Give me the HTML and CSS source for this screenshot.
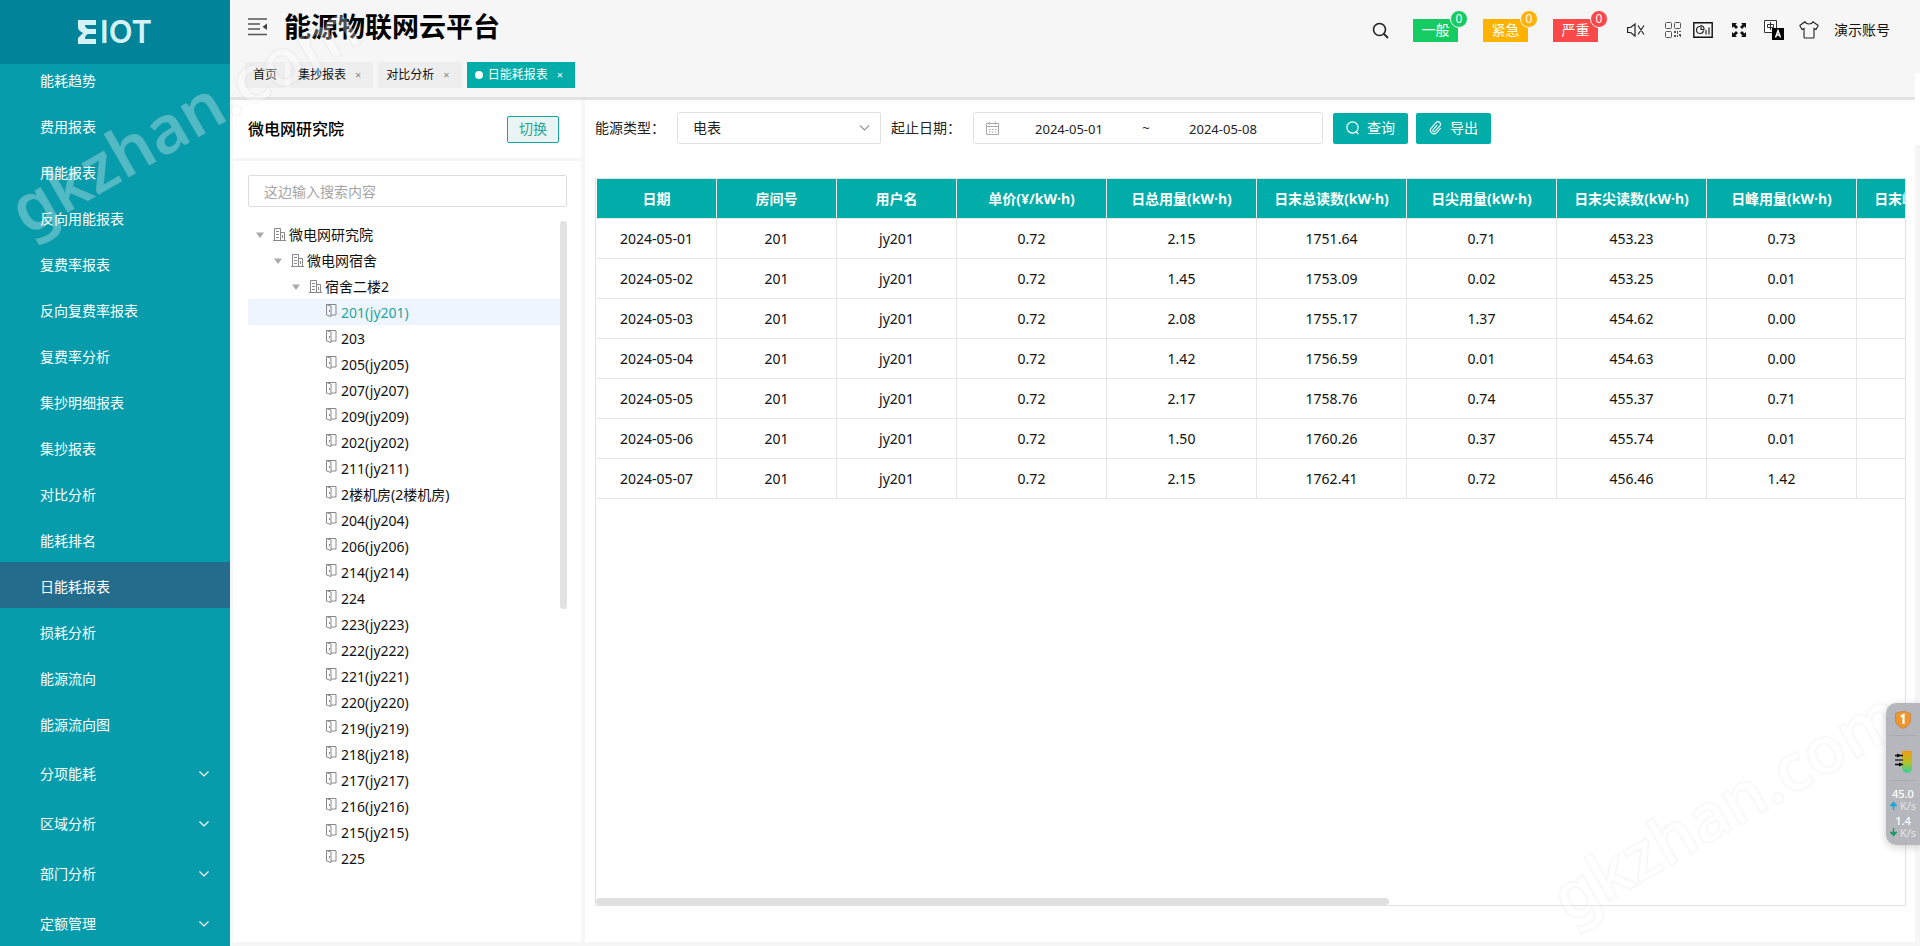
FILE: index.html
```html
<!DOCTYPE html>
<html lang="zh-CN">
<head>
<meta charset="utf-8">
<title>能源物联网云平台</title>
<link rel="stylesheet" href="styles.css">
</head>
<body>
<svg class="sprite" aria-hidden="true">
  <symbol id="i-building" viewBox="0 0 13 13"><path d="M1.5 12V.5h6V12M7.500 4.500h4V12M0 12.500h13M3 3.500h3M3 6.500h3M3 9.500h3M9.500 7v3" fill="none" stroke="#888"/></symbol>
  <symbol id="i-door" viewBox="0 0 11 13"><path d="M.5.5v10.500l4.500 1.500V2zM.5.500h9.500v10.500H5M3.500 6v2" fill="none" stroke="#888"/></symbol>
  <symbol id="i-caret" viewBox="0 0 8 6"><path d="M0 .5h8L4 6z" fill="#aaa"/></symbol>
  <symbol id="i-chevron" viewBox="0 0 12 8"><path d="M1.500 1.500L6 6l4.500-4.500" fill="none" stroke="currentColor" stroke-width="1.200"/></symbol>
</svg>

<div class="app">
  <aside class="sidebar">
    <div class="logo">
      <svg class="logo-mark" viewBox="0 0 18 24"><path d="M0 0h18v5H7c0 2 1 3 3 4h8v5h-8c-2 1-3 2-3 5h11v5H0v-6l5-5c-3-2-5-3-5-6z"/></svg>
      <span>IOT</span>
    </div>
    <nav class="nav">
      <ul>
        <li><a href="#">能耗趋势</a></li>
        <li><a href="#">费用报表</a></li>
        <li><a href="#">用能报表</a></li>
        <li><a href="#">反向用能报表</a></li>
        <li><a href="#">复费率报表</a></li>
        <li><a href="#">反向复费率报表</a></li>
        <li><a href="#">复费率分析</a></li>
        <li><a href="#">集抄明细报表</a></li>
        <li><a href="#">集抄报表</a></li>
        <li><a href="#">对比分析</a></li>
        <li><a href="#">能耗排名</a></li>
        <li><a href="#" class="current">日能耗报表</a></li>
        <li><a href="#">损耗分析</a></li>
        <li><a href="#">能源流向</a></li>
        <li><a href="#">能源流向图</a></li>
      </ul>
      <ul class="groups">
        <li><a href="#">分项能耗<svg><use href="#i-chevron"/></svg></a></li>
        <li><a href="#">区域分析<svg><use href="#i-chevron"/></svg></a></li>
        <li><a href="#">部门分析<svg><use href="#i-chevron"/></svg></a></li>
        <li><a href="#">定额管理<svg><use href="#i-chevron"/></svg></a></li>
      </ul>
    </nav>
  </aside>

  <div class="main">
    <header class="header">
      <div class="topbar">
        <button class="icon-btn fold" aria-label="折叠菜单"><svg width="20" height="18" viewBox="0 0 20 18"><path d="M0 1h19M0 6h12M0 11h12M0 16.500h19" fill="none" stroke="#555" stroke-width="1.500"/><path d="M19 5.500v6.500l-4.500-3.200z" fill="#444"/></svg></button>
        <h1>能源物联网云平台</h1>
        <div class="tools">
          <button class="icon-btn search" aria-label="搜索"><svg width="17" height="17" viewBox="0 0 17 17"><circle cx="7.500" cy="7.500" r="6" fill="none" stroke="#222" stroke-width="1.600"/><path d="M12 12l4 4" stroke="#222" stroke-width="1.800"/></svg></button>
          <div class="alarms">
            <button class="alarm green">一般<span>0</span></button>
            <button class="alarm yellow">紧急<span>0</span></button>
            <button class="alarm red">严重<span>0</span></button>
          </div>
          <button class="icon-btn mute" aria-label="静音"><svg width="18" height="14" viewBox="0 0 18 14"><path d="M.6 4.500h3L8 1v12L3.600 9.500h-3zM11 2.500l6 9M17 2.500l-6 9" fill="none" stroke="#222" stroke-width="1.200"/></svg></button>
          <button class="icon-btn qr" aria-label="二维码"><svg width="16" height="16" viewBox="0 0 16 16"><g fill="none" stroke="#555"><rect x=".5" y=".5" width="6" height="6" rx="1"/><rect x="9.500" y=".5" width="6" height="6" rx="1"/><rect x=".5" y="9.500" width="6" height="6" rx="1"/></g><path d="M9 9h2v2H9zM12 9h1v3h-1zM14 9h2v1h-2zM9 13h2v2H9zM12 13h1v2h-1zM14 12h2v3h-1v-1h-1z" fill="#555"/></svg></button>
          <button class="icon-btn chart" aria-label="大屏"><svg width="20" height="16" viewBox="0 0 20 16"><path d="M.8.8h18.400v14.400H.8z" fill="none" stroke="#111" stroke-width="1.400"/><path d="M7 4.500a3.500 3.500 0 1 0 3.500 4M8 3.500v4h3A3.500 3.500 0 0 0 8 3.500zM13 8v4.500M16 5.500v7" fill="none" stroke="#222" stroke-width="1.200"/></svg></button>
          <button class="icon-btn full" aria-label="全屏"><svg width="14" height="14" viewBox="0 0 14 14"><path d="M0 0h5L3.500 1.500 6 4 4 6 1.500 3.500 0 5zM14 0v5l-1.500-1.500L10 6 8 4l2.500-2.500L9 0zM0 14V9l1.500 1.500L4 8l2 2-2.500 2.500L5 14zM14 14H9l1.500-1.500L8 10l2-2 2.500 2.500L14 9z" fill="#111"/></svg></button>
          <button class="icon-btn lang" aria-label="语言"><svg width="20" height="20" viewBox="0 0 20 20"><path d="M.5.5h12v12H.5z" fill="#fff" stroke="#333"/><path d="M3.500 4.500h6v3h-6zM6.500 2v8" fill="none" stroke="#333"/><path d="M8 8h12v12H8z" fill="#000"/><path d="M11.500 17.500l2.500-7 2.500 7M12.500 15h3" fill="none" stroke="#fff" stroke-width="1.400"/></svg></button>
          <button class="icon-btn shirt" aria-label="主题"><svg width="20" height="18" viewBox="0 0 20 18"><path d="M6 .8L.8 4.500 3 8.500l2-1v8.500q0 1 1 1h8q1 0 1-1V7.500l2 1 2.200-4L14 .8q-1 2.200-4 2.200T6 .8z" fill="none" stroke="#222" stroke-width="1.100"/></svg></button>
          <a href="#" class="account">演示账号</a>
        </div>
      </div>
      <nav class="tabs">
        <a href="#">首页</a>
        <a href="#" class="closable">集抄报表<i>×</i></a>
        <a href="#" class="closable">对比分析<i>×</i></a>
        <a href="#" class="closable active">日能耗报表<i>×</i></a>
      </nav>
    </header>

    <div class="body">
      <section class="panel tree-panel">
        <div class="tree-head"><h2>微电网研究院</h2><button class="switch">切换</button></div>
        <div class="tree-body">
          <input class="tree-search" type="text" placeholder="这边输入搜索内容" aria-label="搜索内容">
          <div class="tree-wrap">
            <ul class="tree">
              <li class="l1"><svg class="caret"><use href="#i-caret"/></svg><svg class="building"><use href="#i-building"/></svg>微电网研究院</li>
              <li class="l2"><svg class="caret"><use href="#i-caret"/></svg><svg class="building"><use href="#i-building"/></svg>微电网宿舍</li>
              <li class="l3"><svg class="caret"><use href="#i-caret"/></svg><svg class="building"><use href="#i-building"/></svg>宿舍二楼2</li>
              <li class="leaf selected"><svg class="door"><use href="#i-door"/></svg>201(jy201)</li>
              <li class="leaf"><svg class="door"><use href="#i-door"/></svg>203</li>
              <li class="leaf"><svg class="door"><use href="#i-door"/></svg>205(jy205)</li>
              <li class="leaf"><svg class="door"><use href="#i-door"/></svg>207(jy207)</li>
              <li class="leaf"><svg class="door"><use href="#i-door"/></svg>209(jy209)</li>
              <li class="leaf"><svg class="door"><use href="#i-door"/></svg>202(jy202)</li>
              <li class="leaf"><svg class="door"><use href="#i-door"/></svg>211(jy211)</li>
              <li class="leaf"><svg class="door"><use href="#i-door"/></svg>2楼机房(2楼机房)</li>
              <li class="leaf"><svg class="door"><use href="#i-door"/></svg>204(jy204)</li>
              <li class="leaf"><svg class="door"><use href="#i-door"/></svg>206(jy206)</li>
              <li class="leaf"><svg class="door"><use href="#i-door"/></svg>214(jy214)</li>
              <li class="leaf"><svg class="door"><use href="#i-door"/></svg>224</li>
              <li class="leaf"><svg class="door"><use href="#i-door"/></svg>223(jy223)</li>
              <li class="leaf"><svg class="door"><use href="#i-door"/></svg>222(jy222)</li>
              <li class="leaf"><svg class="door"><use href="#i-door"/></svg>221(jy221)</li>
              <li class="leaf"><svg class="door"><use href="#i-door"/></svg>220(jy220)</li>
              <li class="leaf"><svg class="door"><use href="#i-door"/></svg>219(jy219)</li>
              <li class="leaf"><svg class="door"><use href="#i-door"/></svg>218(jy218)</li>
              <li class="leaf"><svg class="door"><use href="#i-door"/></svg>217(jy217)</li>
              <li class="leaf"><svg class="door"><use href="#i-door"/></svg>216(jy216)</li>
              <li class="leaf"><svg class="door"><use href="#i-door"/></svg>215(jy215)</li>
              <li class="leaf"><svg class="door"><use href="#i-door"/></svg>225</li>
            </ul>
            <div class="tree-track"><div class="tree-thumb"></div></div>
          </div>
        </div>
      </section>

      <section class="panel content">
        <form class="filters">
          <label for="type">能源类型：</label>
          <div class="select">
            <select id="type"><option>电表</option></select>
            <svg><use href="#i-chevron"/></svg>
          </div>
          <label for="from">起止日期：</label>
          <div class="range">
            <svg width="13" height="13" viewBox="0 0 13 13"><path d="M.5 1.500h12v11H.5zM.5 4.500h12M3.500 0v2.500M9.500 0v2.500M3 7.500h1.500M6 7.500h1.500M9 7.500h1.500M3 10h1.500M6 10h1.500M9 10h1.500" fill="none" stroke="#aaa"/></svg>
            <input id="from" type="text" value="2024-05-01">
            <span>~</span>
            <input type="text" value="2024-05-08" aria-label="结束日期">
          </div>
          <button type="button" class="action"><svg width="14" height="14" viewBox="0 0 14 14"><circle cx="6.500" cy="6.500" r="5.600" fill="none" stroke="#fff" stroke-width="1.200"/><path d="M10 10.500l2.500 2.800" stroke="#fff" stroke-width="1.200"/></svg>查询</button>
          <button type="button" class="action"><svg width="14" height="14" viewBox="0 0 14 14"><g transform="rotate(42 7 7)"><path d="M10.500 4v6a3.500 3.500 0 0 1-7 0V3a2.500 2.500 0 0 1 5 0v7a1.300 1.300 0 0 1-2.600 0V4" fill="none" stroke="#fff" stroke-width="1.100"/></g></svg>导出</button>
        </form>

        <div class="grid">
          <div class="grid-scroll">
            <table>
              <colgroup><col class="s"><col class="s"><col class="s"><col><col><col><col><col><col><col></colgroup>
              <thead><tr><th>日期</th><th>房间号</th><th>用户名</th><th>单价(¥/kW·h)</th><th>日总用量(kW·h)</th><th>日末总读数(kW·h)</th><th>日尖用量(kW·h)</th><th>日末尖读数(kW·h)</th><th>日峰用量(kW·h)</th><th>日末峰读数(kW·h)</th></tr></thead>
              <tbody>
                <tr><td>2024-05-01</td><td>201</td><td>jy201</td><td>0.72</td><td>2.15</td><td>1751.64</td><td>0.71</td><td>453.23</td><td>0.73</td><td></td></tr>
                <tr><td>2024-05-02</td><td>201</td><td>jy201</td><td>0.72</td><td>1.45</td><td>1753.09</td><td>0.02</td><td>453.25</td><td>0.01</td><td></td></tr>
                <tr><td>2024-05-03</td><td>201</td><td>jy201</td><td>0.72</td><td>2.08</td><td>1755.17</td><td>1.37</td><td>454.62</td><td>0.00</td><td></td></tr>
                <tr><td>2024-05-04</td><td>201</td><td>jy201</td><td>0.72</td><td>1.42</td><td>1756.59</td><td>0.01</td><td>454.63</td><td>0.00</td><td></td></tr>
                <tr><td>2024-05-05</td><td>201</td><td>jy201</td><td>0.72</td><td>2.17</td><td>1758.76</td><td>0.74</td><td>455.37</td><td>0.71</td><td></td></tr>
                <tr><td>2024-05-06</td><td>201</td><td>jy201</td><td>0.72</td><td>1.50</td><td>1760.26</td><td>0.37</td><td>455.74</td><td>0.01</td><td></td></tr>
                <tr><td>2024-05-07</td><td>201</td><td>jy201</td><td>0.72</td><td>2.15</td><td>1762.41</td><td>0.72</td><td>456.46</td><td>1.42</td><td></td></tr>
              </tbody>
            </table>
          </div>
          <div class="grid-bar"></div>
        </div>
      </section>
    </div>
  </div>
</div>

<div class="edge"></div>
<div class="watermark first">gkzhan.com</div>
<div class="watermark second">gkzhan.com</div>

<aside class="monitor">
  <svg width="16" height="18" viewBox="0 0 16 18"><path d="M8 0l7.500 2.500V9q0 5.500-7.500 8.500Q.5 14.500.5 9V2.500z" fill="#f0962c" stroke="#c98a4a"/><path d="M5.800 5.500L8.500 4v9" fill="none" stroke="#fff" stroke-width="2.200"/></svg>
  <hr>
  <svg class="tube" width="18" height="24" viewBox="0 0 18 24"><defs><linearGradient id="g" x2="0" y2="1"><stop stop-color="#f09a10"/><stop offset=".5" stop-color="#b5c224"/><stop offset="1" stop-color="#2fd0a0"/></linearGradient></defs><path d="M8 1h10v17a5 5 0 0 1-10 0z" fill="url(#g)"/><path d="M1 5.500h8M1 14.500h8" stroke="#000" stroke-width="1.400"/><path d="M3 3.500l4 2-4 2zM5 12.500l4 2-4 2z"/><path d="M1 10h8" stroke="#555" stroke-width="2"/></svg>
  <hr>
  <div class="speed"><b>45.0</b><span><svg width="7" height="9" viewBox="0 0 7 9"><path d="M3.500 9V2M.8 4.500l2.700-3 2.700 3z" fill="#1aa6dc" stroke="#1aa6dc" stroke-width="1.400"/></svg>K/s</span></div>
  <div class="speed"><b>1.4</b><span><svg width="7" height="9" viewBox="0 0 7 9"><path d="M3.500 0v7M.8 4.500l2.700 3 2.700-3z" fill="#1f9b62" stroke="#1f9b62" stroke-width="1.400"/></svg>K/s</span></div>
</aside>
</body>
</html>
```
FILE: styles.css
```css
* { box-sizing: border-box; }
body {
  margin: 0;
  position: relative;
  overflow: hidden;
  font: 14px/20px "Noto Sans", "Noto Sans CJK SC", sans-serif;
  color: #111;
  background: #f6f6f6;
}
ul { list-style: none; margin: 0; padding: 0; }
a { color: inherit; text-decoration: none; }
button, input, select { font: inherit; color: inherit; }
svg { display: block; flex: none; }
.sprite { position: absolute; width: 0; height: 0; }

.app { display: flex; height: 100vh; }

/* sidebar */
.sidebar { flex: none; width: 230px; display: flex; flex-direction: column; background: #069cac; color: #fff; }
.logo {
  flex: none; height: 64px; display: flex; align-items: center; justify-content: center; gap: 4px;
  background: #018399; color: #d5f3f6; font: 600 31px/40px Inter, sans-serif;
}
.logo-mark { width: 18px; height: 24px; fill: currentColor; }
.nav { flex: 1; min-height: 0; overflow: hidden; }
.nav ul:first-child { margin-top: -8px; }
.nav a { display: flex; align-items: center; justify-content: space-between; height: 46px; padding: 4px 20px 0 40px; }
.nav .current { background: #246c8c; }
.nav .groups { padding-top: 2px; }
.nav .groups a { height: 50px; padding-top: 2px; }
.nav svg { width: 12px; height: 8px; }

/* header */
.main { flex: 1; min-width: 0; display: flex; flex-direction: column; padding-right: 5px; }
.header { flex: none; height: 100px; padding: 0 25px 0 15px; border-bottom: 3px solid #e2e2e2; }
.topbar { display: flex; align-items: center; height: 54px; }
.icon-btn { border: 0; padding: 0; background: none; }
.fold { margin-left: 3px; }
h1 { margin: 0 0 0 16px; font-size: 27px; line-height: 40px; font-weight: 700; color: #000; }
.tools { display: flex; align-items: center; margin-left: auto; padding-top: 6px; }
.alarms { display: flex; gap: 25px; margin: 0 29px 0 24px; }
.alarm { position: relative; width: 45px; height: 23px; padding: 0; border: 0; color: #fff; line-height: 22px; }
.alarm span {
  position: absolute; top: -9px; right: -10px; width: 18px; height: 18px;
  border: 1px solid #f6f6f6; border-radius: 9px; background: inherit; font-size: 12px; line-height: 15px;
}
.green { background: #15cc62; }
.yellow { background: #ffb300; }
.red { background: #fb4848; }
.mute { margin-right: 20px; }
.qr { margin-right: 12px; }
.chart { margin-right: 19px; }
.full { margin-right: 18px; }
.lang, .shirt { margin-right: 15px; }

.tabs { display: flex; gap: 5px; padding-top: 8px; font-size: 12px; }
.tabs a { height: 26px; padding: 0 8px; line-height: 26px; background: #eee; }
.tabs .closable { display: flex; padding: 0 12px 0 8px; }
.tabs i { margin-left: 9px; font-style: normal; font-size: 11px; color: #888; }
.tabs .active { align-items: center; background: #00ada9; color: #fff; }
.tabs .active::before { content: ""; width: 8px; height: 8px; margin-right: 5px; border-radius: 4px; background: #fff; }
.tabs .active i { color: #fff; }

/* body */
.body { flex: 1; min-height: 0; display: flex; gap: 4px; padding: 0 0 4px 3px; }
.panel { background: #fff; }
.tree-panel { flex: none; width: 348px; }
.tree-head {
  display: flex; align-items: center; justify-content: space-between; height: 61px;
  padding: 0 22px 0 15px; border-bottom: 3px solid #f6f6f6;
}
h2 { margin: 0; font-size: 16px; font-weight: 500; color: #000; }
.switch { width: 52px; height: 27px; padding: 0; border: 1px solid #16a39d; border-radius: 2px; background: #e8f5f4; color: #26a69a; line-height: 24px; }
.tree-body { padding: 14px 14px 0 15px; }
.tree-search { display: block; width: 100%; height: 32px; padding: 0 15px; border: 1px solid #ddd; border-radius: 2px; }
.tree-search::placeholder { color: #a5a5a5; }
.tree-wrap { display: flex; padding-top: 14px; }
.tree { flex: 1; }
.tree li { display: flex; align-items: center; height: 26px; padding: 1px 0 0 8px; }
.tree .l2 { padding-left: 26px; }
.tree .l3 { padding-left: 44px; }
.tree .leaf { padding-left: 78px; }
.tree .selected { background: #eff5ff; color: #26a69a; }
.caret { width: 8px; height: 6px; margin-right: 9px; }
.building { width: 13px; height: 13px; margin-right: 3px; }
.door { width: 11px; height: 13px; margin: 0 4px 4px 0; }
.tree-track { width: 7px; }
.tree-thumb { height: 388px; border-radius: 4px; background: #e2e2e2; }

.content { flex: 1; min-width: 0; display: flex; flex-direction: column; padding: 12px 9px 36px 10px; }
.filters { display: flex; align-items: center; height: 32px; color: #222; }
.filters label { width: 82px; line-height: 30px; }
.select { position: relative; width: 204px; margin-right: 10px; }
.select select { width: 100%; height: 32px; padding: 0 15px; border: 1px solid #e2e2e2; border-radius: 2px; background: #fff; appearance: none; }
.select svg { position: absolute; right: 10px; top: 12px; width: 13px; height: 8px; color: #999; }
.range {
  display: flex; align-items: center; width: 350px; height: 32px; margin-right: 10px; padding-left: 12px;
  border: 1px solid #e2e2e2; border-radius: 2px; font-size: 13px;
}
.range input { width: 140px; border: 0; padding: 2px 0 0; text-align: center; background: none; }
.range span { width: 14px; text-align: center; }
.action {
  display: flex; align-items: center; justify-content: center; gap: 7px; width: 75px; height: 31px; margin-right: 8px;
  padding: 0; border: 0; border-radius: 2px; background: #00ada9; color: #fff;
}

.grid { position: relative; flex: 1; min-height: 0; margin-top: 34px; border: 1px solid #e2e2e2; }
.grid-scroll { height: 100%; overflow: hidden; padding-left: 1px; }
.grid-bar { position: absolute; left: 0; right: 516px; bottom: 0; height: 7px; border-radius: 4px; background: #e0e0e0; }
table { width: 1410px; border-collapse: separate; border-spacing: 0; table-layout: fixed; }
col { width: 150px; }
.s { width: 120px; }
th, td { height: 40px; padding: 1px 0 0; border: 0 solid #e6e6e6; border-width: 0 1px 1px 0; text-align: center; }
th { background: #00ada9; color: #fff; font-weight: 700; }

/* overlays */
.edge { position: absolute; right: 0; top: 73px; width: 5px; height: 72px; background: #fff; }
.watermark {
  position: absolute; font: 600 66px/80px "Noto Sans", sans-serif; color: rgba(255, 255, 255, .3);
  -webkit-text-stroke: 2px rgba(120, 120, 120, .05); transform: rotate(-30deg); pointer-events: none;
}
.first { left: -12px; top: 76px; }
.second { right: 0; top: 764px; }

.monitor {
  position: absolute; right: 0; top: 703px; width: 34px; height: 142px; padding-top: 8px;
  display: flex; flex-direction: column; align-items: center;
  border-radius: 10px 0 0 10px; background: rgba(176, 177, 183, .93); box-shadow: 0 2px 8px rgba(0, 0, 0, .2);
  color: #fff;
}
.monitor hr { width: 26px; margin: 6px 0; border: 0; border-top: 1px solid #a9aab0; }
.tube { margin: 8px 0 0; }
.speed { height: 27px; font-size: 11px; line-height: 13px; text-align: center; }
.speed b { display: block; font-weight: 500; }
.speed span { display: flex; align-items: center; gap: 3px; line-height: 11px; color: #e4e4e8; }
```
